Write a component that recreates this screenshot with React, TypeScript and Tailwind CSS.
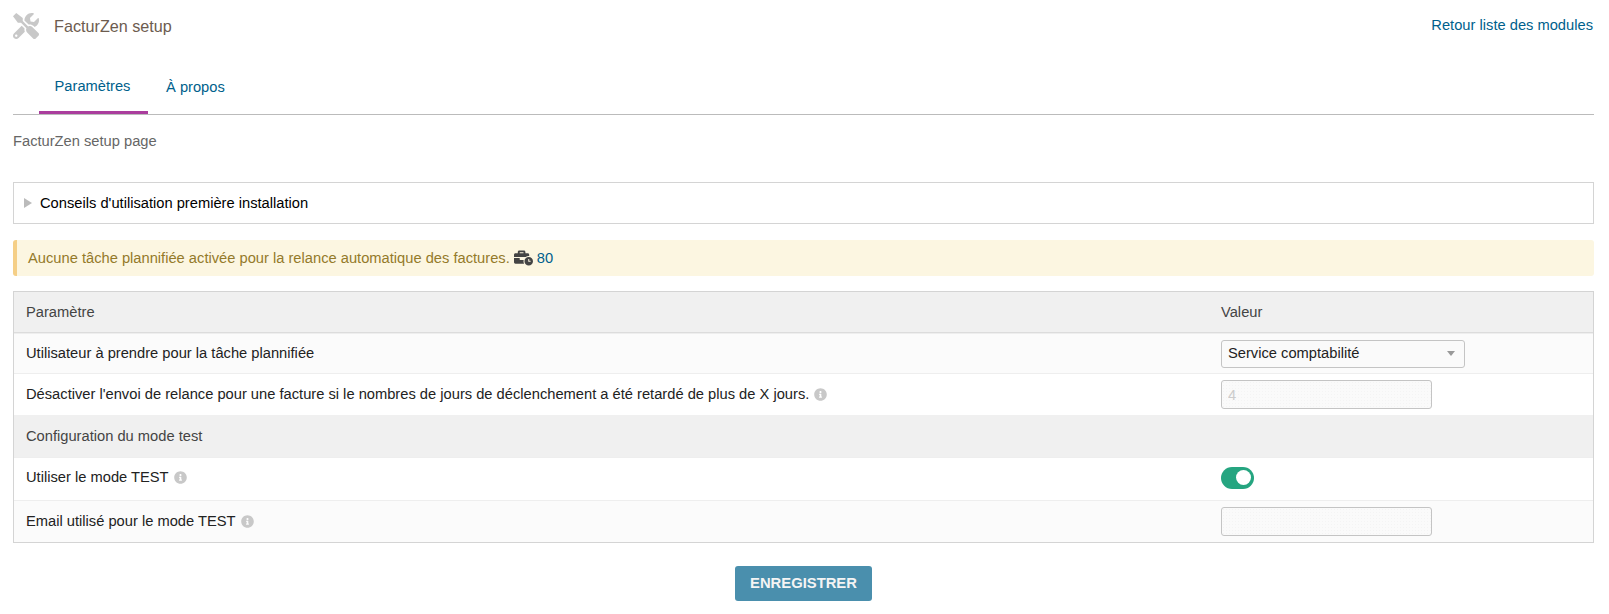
import { FaBusinessTime, FaInfoCircle, FaTools } from "react-icons/fa";

function Hint() {
  return <FaInfoCircle className="ml-[5px] inline-block h-[13px] w-[13px] align-[-2px] text-[#c8c8c8]" />;
}

const fieldClass =
  "h-[29px] w-[211px] rounded-[3px] border border-[#c4c4c4] bg-[#fafafa] px-[6px] text-[14.7px] text-[#cccccc] bg-[radial-gradient(#f4f4f4_0.5px,transparent_0.5px)] bg-[length:3px_3px]";

function Row({
  label,
  hint,
  striped,
  height,
  children,
}: {
  label: string;
  hint?: boolean;
  striped?: boolean;
  height: string;
  children: React.ReactNode;
}) {
  return (
    <div className={`flex items-center border-t border-[#eeeeee] ${striped ? "bg-[#fbfbfb]" : "bg-white"} ${height}`}>
      <div className="w-[1207px] pl-[12px] text-[#222222]">
        {label}
        {hint && <Hint />}
      </div>
      <div className="flex-1">{children}</div>
    </div>
  );
}

export default function App() {
  return (
    <div className="h-[614px] overflow-hidden bg-white pl-[13px] pr-[15px] font-['Liberation_Sans',Arial,sans-serif] text-[14.7px] leading-[21px] text-[#333333]">
      <header className="flex h-[56px] items-start justify-between pt-[13px]">
        <div className="flex items-center">
          <FaTools className="h-[26px] w-[26px] text-[#c8c8c8]" />
          <span className="ml-[15px] pt-[1px] text-[16.2px] text-[#6d5c4f]">FacturZen setup</span>
        </div>
        <a className="mr-[1px] mt-[2px] text-[#005f8c]">Retour liste des modules</a>
      </header>

      <nav className="flex h-[59px] border-b border-[#bbbbbb] text-[#005f8c]">
        <a className="ml-[26px] flex h-[58px] w-[109px] items-center justify-center rounded-t-[2px] border-b-[3px] border-[#aa3d9d] pr-[2px] pt-[6px]">
          Paramètres
        </a>
        <a className="ml-[18px] flex h-[58px] items-center pt-[4px]">À propos</a>
      </nav>

      <p className="mt-[16px] text-[#666666]">FacturZen setup page</p>

      <div className="mt-[30px] flex h-[42px] items-center border border-[#d4d4d4] pl-[10px] text-black">
        <svg viewBox="0 0 8 10" className="h-[10px] w-[8px] text-[#bbbbbb]" fill="currentColor">
          <polygon points="0,0 8,5 0,10" />
        </svg>
        <span className="ml-[8px]">Conseils d'utilisation première installation</span>
      </div>

      <div className="mt-[16px] flex h-[36px] items-center rounded-[3px] border-l-[4px] border-[#f5cf87] bg-[#fcf6e1] pl-[11px] text-[#947a2a]">
        Aucune tâche plannifiée activée pour la relance automatique des factures.
        <FaBusinessTime className="ml-[4px] h-[16px] w-[19px] text-[#444444]" />
        <a className="ml-[4px] text-[#005f8c]">80</a>
      </div>

      <section className="mt-[15px] border border-[#d4d4d4]">
        <div className="flex h-[40px] items-center bg-[#f0f0f0] text-[#444444]">
          <div className="w-[1207px] pl-[12px]">Paramètre</div>
          <div>Valeur</div>
        </div>
        <div className="border-t border-[#dcdcdc]" />
        <Row label="Utilisateur à prendre pour la tâche plannifiée" striped height="h-[40px]">
          <div className="flex h-[28px] w-[244px] items-center justify-between rounded-[3px] border border-[#c4c4c4] bg-[#fafafa] pl-[6px] pr-[9px] text-[#222222]">
            Service comptabilité
            <span className="h-0 w-0 border-x-[4px] border-t-[5px] border-x-transparent border-t-[#999999]" />
          </div>
        </Row>
        <Row
          label="Désactiver l'envoi de relance pour une facture si le nombres de jours de déclenchement a été retardé de plus de X jours."
          hint
          height="h-[42px]"
        >
          <input className={fieldClass} defaultValue="4" />
        </Row>
        <div className="flex h-[42px] items-center bg-[#f0f0f0] pl-[12px] text-[#444444]">Configuration du mode test</div>
        <Row label="Utiliser le mode TEST" hint height="h-[43px] pb-[3px]">
          <span className="flex h-[22px] w-[33px] items-center justify-end rounded-full bg-[#25a580] pr-[3px]">
            <span className="h-[15px] w-[15px] rounded-full bg-white" />
          </span>
        </Row>
        <Row label="Email utilisé pour le mode TEST" hint striped height="h-[42px]">
          <input className={fieldClass} />
        </Row>
      </section>

      <div className="mt-[23px] flex justify-center">
        <button className="h-[35px] w-[137px] rounded-[3px] bg-[#4a8fad] text-[14.8px] font-bold text-[#f4f4f4]">
          ENREGISTRER
        </button>
      </div>
    </div>
  );
}
